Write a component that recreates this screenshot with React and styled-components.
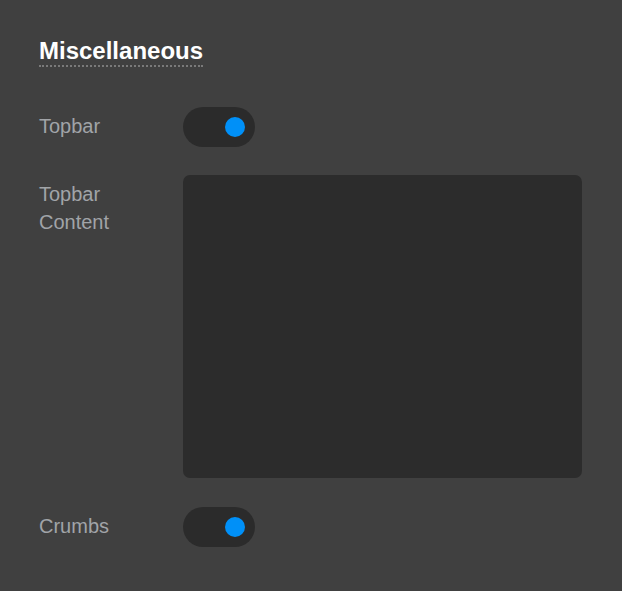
import React from "react";
import styled, { createGlobalStyle } from "styled-components";

const Global = createGlobalStyle`
  html, body { margin: 0; padding: 0; background: #404040; }
  body { font-family: "Liberation Sans", Arial, sans-serif; }
`;

const Panel = styled.div`
  box-sizing: border-box;
  width: 622px;
  min-height: 591px;
  padding: 37px 40px 0 39px;
  background: #404040;
`;

const Title = styled.h2`
  display: inline-block;
  margin: 0 0 40px;
  font-size: 24px;
  font-weight: 700;
  line-height: 27px;
  color: #ffffff;
  padding-bottom: 1px;
  border-bottom: 2px dotted #7a7a7a;
`;

const Row = styled.div`
  display: flex;
  align-items: flex-start;
  margin-bottom: ${(p) => p.$gap ?? 28}px;
`;

const Label = styled.div`
  width: 144px;
  flex: none;
  padding-top: 5px;
  font-size: 20px;
  line-height: 28px;
  color: #a1a4a8;
  white-space: pre-line;
`;

const Track = styled.div`
  position: relative;
  width: 72px;
  height: 40px;
  border-radius: 20px;
  background: #2b2b2b;
`;

const Knob = styled.span`
  position: absolute;
  top: 10px;
  right: 10px;
  width: 20px;
  height: 20px;
  border-radius: 50%;
  background: #0090f8;
`;

const Area = styled.div`
  flex: 1;
  height: 303px;
  border-radius: 7px;
  background: #2c2c2c;
`;

const Toggle = () => (
  <Track>
    <Knob />
  </Track>
);

export default function App() {
  return (
    <>
      <Global />
      <Panel>
        <Title>Miscellaneous</Title>
        <Row>
          <Label>Topbar</Label>
          <Toggle />
        </Row>
        <Row $gap={29}>
          <Label>{"Topbar\nContent"}</Label>
          <Area />
        </Row>
        <Row>
          <Label>Crumbs</Label>
          <Toggle />
        </Row>
      </Panel>
    </>
  );
}
